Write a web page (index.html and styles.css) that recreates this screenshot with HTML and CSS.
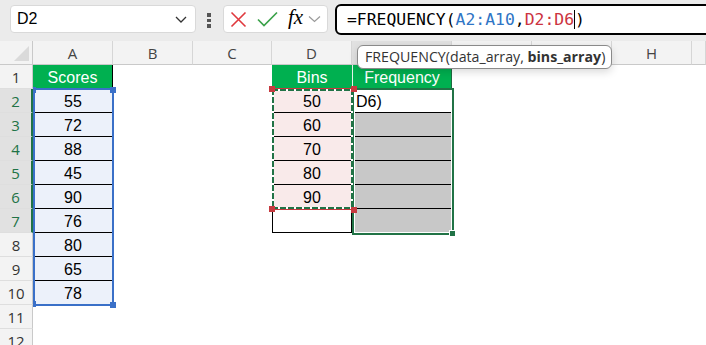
FILE: index.html
```html
<!DOCTYPE html>
<html lang="en">
<head>
    <meta charset="UTF-8">
    <meta name="viewport" content="width=device-width, initial-scale=1.0">
    <title>FREQUENCY - Sheet1</title>
    <link rel="stylesheet" href="styles.css">
</head>
<body>
    <header class="toolbar">
        <div class="namebox">
            <span>D2</span>
            <svg class="chev" width="12" height="7" viewBox="0 0 12 7"><path d="M1 1l5 5 5-5" fill="none" stroke="#333" stroke-width="1.3"/></svg>
        </div>
        <div class="dots"><i></i><i></i><i></i></div>
        <div class="fxbox">
            <svg width="17" height="17" viewBox="0 0 17 17"><path d="M1.5 1.5l14 14M15.5 1.5l-14 14" stroke="#e0393e" stroke-width="1.6"/></svg>
            <svg width="21" height="16" viewBox="0 0 21 16"><path d="M1 8.5l6 6L20 1.5" fill="none" stroke="#3ba24a" stroke-width="1.7"/></svg>
            <span class="fx">fx</span>
            <svg width="13" height="8" viewBox="0 0 13 8"><path d="M1 1.5l5.5 5 5.5-5" fill="none" stroke="#9a9a9a" stroke-width="1.2"/></svg>
        </div>
        <div class="formula">
            <span>=FREQUENCY(</span><span class="ref-a">A2:A10</span><span>,</span><span class="ref-d">D2:D6</span><span class="caret"></span><span>)</span>
        </div>
    </header>

    <main class="sheet">
        <div class="row colhead">
            <div class="corner"></div>
            <div class="ch">A</div><div class="ch">B</div><div class="ch">C</div><div class="ch">D</div>
            <div class="ch sel"></div><div class="ch"></div><div class="ch"></div><div class="ch">H</div><div class="ch"></div>
        </div>
        <div class="row">
            <div class="rh">1</div>
            <div class="cell hdr hdr-a">Scores</div><div class="cell"></div><div class="cell"></div>
            <div class="cell hdr">Bins</div><div class="cell hdr hdr-e">Frequency</div>
            <div class="cell"></div><div class="cell"></div><div class="cell"></div><div class="cell"></div>
        </div>
        <div class="row">
            <div class="rh on">2</div>
            <div class="cell sa">55</div><div class="cell"></div><div class="cell"></div>
            <div class="cell sd">50</div><div class="cell e2">D6)</div>
            <div class="cell"></div><div class="cell"></div><div class="cell"></div><div class="cell"></div>
        </div>
        <div class="row">
            <div class="rh on">3</div>
            <div class="cell sa">72</div><div class="cell"></div><div class="cell"></div>
            <div class="cell sd">60</div><div class="cell eg"></div>
            <div class="cell"></div><div class="cell"></div><div class="cell"></div><div class="cell"></div>
        </div>
        <div class="row">
            <div class="rh on">4</div>
            <div class="cell sa">88</div><div class="cell"></div><div class="cell"></div>
            <div class="cell sd">70</div><div class="cell eg"></div>
            <div class="cell"></div><div class="cell"></div><div class="cell"></div><div class="cell"></div>
        </div>
        <div class="row">
            <div class="rh on">5</div>
            <div class="cell sa">45</div><div class="cell"></div><div class="cell"></div>
            <div class="cell sd">80</div><div class="cell eg"></div>
            <div class="cell"></div><div class="cell"></div><div class="cell"></div><div class="cell"></div>
        </div>
        <div class="row">
            <div class="rh on">6</div>
            <div class="cell sa">90</div><div class="cell"></div><div class="cell"></div>
            <div class="cell sd">90</div><div class="cell eg"></div>
            <div class="cell"></div><div class="cell"></div><div class="cell"></div><div class="cell"></div>
        </div>
        <div class="row">
            <div class="rh on">7</div>
            <div class="cell sa">76</div><div class="cell"></div><div class="cell"></div>
            <div class="cell d7"></div><div class="cell eg"></div>
            <div class="cell"></div><div class="cell"></div><div class="cell"></div><div class="cell"></div>
        </div>
        <div class="row">
            <div class="rh">8</div>
            <div class="cell sa">80</div><div class="cell"></div><div class="cell"></div>
            <div class="cell"></div><div class="cell"></div>
            <div class="cell"></div><div class="cell"></div><div class="cell"></div><div class="cell"></div>
        </div>
        <div class="row">
            <div class="rh">9</div>
            <div class="cell sa">65</div><div class="cell"></div><div class="cell"></div>
            <div class="cell"></div><div class="cell"></div>
            <div class="cell"></div><div class="cell"></div><div class="cell"></div><div class="cell"></div>
        </div>
        <div class="row">
            <div class="rh">10</div>
            <div class="cell sa">78</div><div class="cell"></div><div class="cell"></div>
            <div class="cell"></div><div class="cell"></div>
            <div class="cell"></div><div class="cell"></div><div class="cell"></div><div class="cell"></div>
        </div>
        <div class="row">
            <div class="rh">11</div>
            <div class="cell"></div><div class="cell"></div><div class="cell"></div>
            <div class="cell"></div><div class="cell"></div>
            <div class="cell"></div><div class="cell"></div><div class="cell"></div><div class="cell"></div>
        </div>
        <div class="row">
            <div class="rh">12</div>
            <div class="cell"></div><div class="cell"></div><div class="cell"></div>
            <div class="cell"></div><div class="cell"></div>
            <div class="cell"></div><div class="cell"></div><div class="cell"></div><div class="cell"></div>
        </div>

        <!-- range highlights drawn over the grid -->
        <div class="range range-a">
            <i class="knob tl"></i><i class="knob tr"></i><i class="knob bl"></i><i class="knob br"></i>
        </div>
        <div class="range range-e"><i class="knob br"></i></div>
        <div class="range range-d">
            <i class="knob tl"></i><i class="knob tr"></i><i class="knob bl"></i><i class="knob br"></i>
        </div>

        <div class="tip">FREQUENCY(data_array, <b>bins_array</b>)</div>
    </main>
</body>
</html>
```

FILE: styles.css
```css
* {
    margin: 0;
    padding: 0;
    box-sizing: border-box;
}
body {
    font-family: "Liberation Sans", Arial, sans-serif;
    background-color: #fff;
    color: #000;
    width: 706px;
    height: 345px;
    overflow: hidden;
}

/* formula bar */
.toolbar {
    display: flex;
    align-items: flex-start;
    height: 41px;
    padding-left: 10px;
    background-color: #ebebeb;
    overflow: hidden;
}
.namebox {
    flex: none;
    display: flex;
    align-items: center;
    justify-content: space-between;
    width: 186px;
    height: 28px;
    margin-top: 5px;
    padding: 0 8px 0 6px;
    background-color: #fff;
    border: 1px solid #d9d9d9;
    border-radius: 4px;
    font-size: 16px;
}
.dots {
    flex: none;
    display: flex;
    flex-direction: column;
    gap: 2px;
    margin: 13px 0 0 11px;
}
.dots i {
    display: block;
    width: 4px;
    height: 3.5px;
    background-color: #555;
}
.fxbox {
    flex: none;
    display: flex;
    align-items: center;
    width: 105px;
    height: 28px;
    margin: 5px 0 0 12px;
    padding-left: 6px;
    gap: 10px;
    background-color: #fff;
    border: 1px solid #d9d9d9;
    border-radius: 4px;
}
.fxbox .fx {
    font-family: "Liberation Serif", serif;
    font-style: italic;
    font-size: 21px;
    margin: -3px -5px 0 0;
}
.formula {
    flex: none;
    display: flex;
    align-items: center;
    width: 390px;
    height: 31px;
    margin: 4px 0 0 7px;
    padding-left: 10px;
    background-color: #fff;
    border: 2px solid #000;
    border-radius: 6px 0 0 6px;
    font-family: "DejaVu Sans Mono", monospace;
    font-size: 16.4px;
    white-space: pre;
}
.ref-a {
    color: #2f75c5;
}
.ref-d {
    color: #cc3340;
}
.caret {
    width: 1px;
    height: 19px;
    background-color: #000;
}

/* grid */
.sheet {
    position: relative;
}
.row {
    display: grid;
    grid-template-columns: 33px 80px 80px 79px 80px 100px 80px 80px 80px 1fr;
    height: 24px;
}
.colhead .ch, .corner {
    background-color: #f3f3f3;
    border-right: 1px solid #d6d6d6;
    border-bottom: 1px solid #c9c9c9;
    padding-top: 1px;
    font-family: "Open Sans", sans-serif;
    font-size: 15px;
    line-height: 22px;
    text-align: center;
    color: #444;
}
.colhead .sel {
    background-color: #e1e1e1;
}
.corner {
    position: relative;
    border-right-color: #c9c9c9;
}
.corner::after {
    content: "";
    position: absolute;
    right: 3px;
    bottom: 3px;
    border-left: 15px solid transparent;
    border-bottom: 15px solid #dadada;
}
.rh {
    background-color: #f3f3f3;
    border-right: 1px solid #c9c9c9;
    border-bottom: 1px solid #dedede;
    padding-top: 2px;
    font-family: "Open Sans", sans-serif;
    font-size: 15px;
    line-height: 21px;
    text-align: center;
    color: #333;
}
.rh.on {
    background-color: #e1e1e1;
    color: #217346;
    border-right: 2px solid #217346;
}
.cell {
    padding-top: 2px;
    font-size: 16px;
    line-height: 21px;
    text-align: center;
}
.hdr {
    background-color: #00b050;
    color: #fff;
}
.hdr-a {
    border-right: 1px solid #000;
}
.hdr-e {
    border-left: 1px solid #e6f2ea;
    border-right: 1px solid #1d6b3f;
}
.sa {
    background-color: #ecf1fa;
    border-bottom: 1px solid #000;
}
.sd {
    background-color: #f9eaea;
    border-bottom: 1px solid #000;
}
.d7 {
    border: 1px solid #000;
    border-top: none;
}
.e2 {
    text-align: left;
    padding-left: 4px;
    border-bottom: 1px solid #000;
}
.eg {
    background-color: #c8c8c8;
    border-bottom: 1px solid #000;
}

/* selections */
.range {
    position: absolute;
}
.range-a {
    left: 33px;
    top: 47px;
    width: 81px;
    height: 218px;
    border: 2px solid #3a70c8;
}
.range-a .knob {
    background-color: #3a70c8;
}
.range-d {
    left: 272px;
    top: 47px;
    width: 81px;
    height: 122px;
    border-top: 1px solid #c63a3f;
    border-bottom: 1px solid #c63a3f;
    background:
        repeating-linear-gradient(90deg, #217346 0 6px, #fff 6px 8px) top / 100% 2px no-repeat,
        repeating-linear-gradient(90deg, #217346 0 6px, #fff 6px 8px) bottom / 100% 2px no-repeat,
        repeating-linear-gradient(180deg, #217346 0 6px, #fff 6px 8px) left / 2px 100% no-repeat,
        repeating-linear-gradient(180deg, #217346 0 6px, #fff 6px 8px) right / 2px 100% no-repeat;
}
.range-d .knob {
    background-color: #c63a3f;
}
.range-e {
    left: 352px;
    top: 47px;
    width: 102px;
    height: 147px;
    border: 2px solid #217346;
    box-shadow: inset 0 0 0 1px #fff;
}
.range-e .knob {
    width: 7px;
    height: 7px;
    background-color: #217346;
    border: 1px solid #fff;
}
.knob {
    position: absolute;
    width: 6px;
    height: 6px;
}
.knob.tl { left: -3px; top: -3px; }
.knob.tr { right: -4px; top: -3px; }
.knob.bl { left: -3px; bottom: -3px; }
.knob.br { right: -4px; bottom: -4px; }
.range-a .knob.tl, .range-a .knob.bl {
    left: -2px;
    width: 3px;
}

.tip {
    position: absolute;
    left: 357px;
    top: 4px;
    width: 255px;
    height: 24px;
    padding-left: 7px;
    background-color: #fff;
    border: 1px solid #8a8a8a;
    border-radius: 6px;
    box-shadow: 0 3px 8px rgba(0, 0, 0, 0.15);
    font-family: "Open Sans", sans-serif;
    font-size: 14.2px;
    line-height: 22px;
    color: #333;
    white-space: nowrap;
}
.tip b {
    font-weight: 700;
}
```
